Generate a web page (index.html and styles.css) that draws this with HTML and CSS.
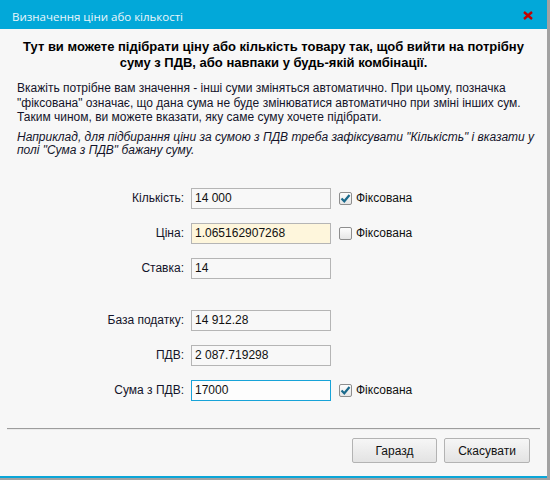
FILE: index.html
```html
<!DOCTYPE html>
<html lang="uk">
<head>
<meta charset="utf-8">
<title>Визначення ціни або кількості</title>
<link rel="stylesheet" href="styles.css">
</head>
<body>
<div class="dialog">
  <div class="titlebar">
    <span class="title">Визначення ціни або кількості</span>
    <svg class="close" width="10" height="9" viewBox="0 0 10 9"><path d="M1 1 L9 8 M9 1 L1 8" stroke="#c40000" stroke-width="2.4" fill="none"/></svg>
  </div>
  <div class="content">
    <p class="heading">Тут ви можете підібрати ціну або кількість товару так, щоб вийти на потрібну<br>суму з ПДВ, або навпаки у будь-якій комбінації.</p>
    <p class="info">Вкажіть потрібне вам значення - інші суми зміняться автоматично. При цьому, позначка<br>"фіксована" означає, що дана сума не буде змінюватися автоматично при зміні інших сум.<br>Таким чином, ви можете вказати, яку саме суму хочете підібрати.</p>
    <p class="example">Наприклад, для підбирання ціни за сумою з ПДВ треба зафіксувати "Кількість" і вказати у<br>полі "Сума з ПДВ" бажану суму.</p>

    <div class="form">
      <label class="lbl">Кількість:</label>
      <div class="field">14 000</div>
      <div class="chk"><span class="box checked"><svg width="11" height="11" viewBox="0 0 11 11"><path d="M1.5 5.5 L4.3 8.3 L9.5 2" stroke="#1b6a8c" stroke-width="2.2" fill="none"/></svg></span>Фіксована</div>

      <label class="lbl">Ціна:</label>
      <div class="field warn">1.065162907268</div>
      <div class="chk"><span class="box"></span>Фіксована</div>

      <label class="lbl">Ставка:</label>
      <div class="field">14</div>
      <div></div>

      <div class="spacer"></div>

      <label class="lbl">База податку:</label>
      <div class="field">14 912.28</div>
      <div></div>

      <label class="lbl">ПДВ:</label>
      <div class="field">2 087.719298</div>
      <div></div>

      <label class="lbl">Сума з ПДВ:</label>
      <div class="field focus">17000</div>
      <div class="chk"><span class="box checked"><svg width="11" height="11" viewBox="0 0 11 11"><path d="M1.5 5.5 L4.3 8.3 L9.5 2" stroke="#1b6a8c" stroke-width="2.2" fill="none"/></svg></span>Фіксована</div>
    </div>
  </div>
  <div class="separator"></div>
  <div class="buttons">
    <button class="btn">Гаразд</button>
    <button class="btn">Скасувати</button>
  </div>
</div>
</body>
</html>
```

FILE: styles.css
```css
html, body {
  margin: 0;
  padding: 0;
}
body {
  width: 550px;
  height: 480px;
  overflow: hidden;
  background: #a2a2a2;
  font-family: "Liberation Sans", Arial, sans-serif;
  font-size: 12px;
  color: #14142a;
}
.dialog {
  width: 547px;
  height: 478px;
  box-sizing: border-box;
  background: #f7f7f7;
  border-bottom: 2px solid #0aa6d8;
  display: flex;
  flex-direction: column;
}
.titlebar {
  height: 29px;
  flex: none;
  background: #02a8d9;
  display: flex;
  align-items: center;
  padding: 3px 0 0 12px;
  box-sizing: border-box;
}
.title {
  font-family: "Open Sans", "Liberation Sans", sans-serif;
  font-size: 11.5px;
  color: #eaf6fb;
  flex: 1;
}
.close {
  margin-right: 14px;
  margin-top: -1px;
}
.content {
  flex: 1;
}
.heading {
  margin: 10px 0 0;
  text-align: center;
  font-weight: bold;
  font-size: 13px;
  line-height: 16px;
  color: #000;
  white-space: nowrap;
}
.info {
  margin: 10px 0 0;
  padding-left: 17px;
  line-height: 14.5px;
  white-space: nowrap;
}
.example {
  margin: 6px 0 0;
  padding-left: 17px;
  line-height: 13px;
  font-style: italic;
  white-space: nowrap;
}
.form {
  margin-top: 31px;
  padding-left: 8px;
  display: grid;
  grid-template-columns: 176px 140px auto;
  grid-template-rows: repeat(3, 21px) 3px repeat(3, 21px);
  column-gap: 7px;
  row-gap: 14px;
  align-items: center;
}
.form .spacer {
  grid-column: 1 / 4;
  height: 3px;
}
.lbl {
  text-align: right;
}
.field {
  height: 21px;
  box-sizing: border-box;
  border: 1px solid #b5b5b5;
  background: #f8f8f8;
  padding: 0 3px;
  line-height: 19px;
  color: #111;
}
.field.warn {
  background: #fef6dc;
}
.field.focus {
  border-color: #18a3d8;
  background: #fdfdfd;
}
.chk {
  display: flex;
  align-items: center;
  gap: 4px;
  padding-left: 1px;
  color: #111;
}
.box {
  width: 13px;
  height: 13px;
  box-sizing: border-box;
  border: 1px solid #8e8e8e;
  border-radius: 2px;
  background: linear-gradient(#fdfdfd, #e6e6e6);
  display: flex;
  align-items: center;
  justify-content: center;
}
.separator {
  flex: none;
  margin: 0 7px 0 7px;
  height: 1px;
  background: #9d9d9d;
  border-bottom: 1px solid #ebebeb;
}
.buttons {
  flex: none;
  display: flex;
  justify-content: flex-end;
  gap: 7px;
  padding: 8px 17px 13px 0;
}
.btn {
  width: 85px;
  height: 25px;
  box-sizing: border-box;
  border: 1px solid #b3b3b3;
  border-radius: 2px;
  background: linear-gradient(#f6f6f6, #e3e3e3);
  font-family: "Liberation Sans", Arial, sans-serif;
  font-size: 12px;
  color: #111;
  padding: 0;
}
.btn + .btn {
  width: 86px;
}
```
